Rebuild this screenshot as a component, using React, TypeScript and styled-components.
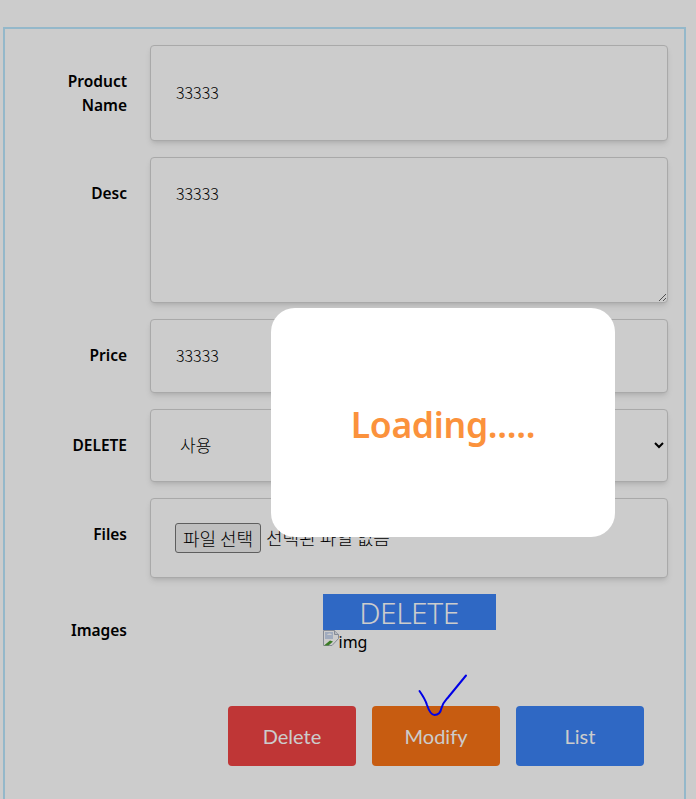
import React from "react";
import styled, { createGlobalStyle } from "styled-components";

const GlobalStyle = createGlobalStyle`
  html, body {
    margin: 0;
    padding: 0;
    background: #fff;
    overflow: hidden;
  }
  body {
    font-family: "Noto Sans CJK KR", "Noto Sans", sans-serif;
    color: #000;
  }
`;

const Page = styled.div`
  padding: 27px 10px 0 3px;
  height: 799px;
  box-sizing: border-box;
`;

const FormBox = styled.div`
  border: 2px solid #bae6fd;
  height: 800px;
  box-sizing: border-box;
  padding: 16px 16px 0 0;
  display: flex;
  flex-direction: column;
  gap: 16px;
`;

const Row = styled.div<{ $height: number }>`
  display: flex;
  height: ${(p) => p.$height}px;
`;

const Label = styled.div`
  width: 122px;
  flex: none;
  box-sizing: border-box;
  padding-top: 24px;
  margin-right: 23px;
  text-align: right;
  font-family: "Noto Sans", sans-serif;
  font-size: 15.5px;
  line-height: 24px;
  font-weight: 600;
`;

const fieldCss = `
  flex: 1;
  min-width: 0;
  box-sizing: border-box;
  border: 1px solid #d4d4d4;
  border-radius: 4px;
  box-shadow: 0 4px 6px -1px rgba(0, 0, 0, 0.1), 0 2px 4px -2px rgba(0, 0, 0, 0.1);
  background: #fff;
  font-family: "Noto Sans CJK KR", "Noto Sans", sans-serif;
  font-size: 16px;
  font-weight: 300;
  color: #000;
  outline: none;
`;

const TextField = styled.input`
  ${fieldCss}
  padding: 0 24px 2px 25px;
`;

const TextArea = styled.textarea`
  ${fieldCss}
  padding: 23px 24px 24px 25px;
  line-height: 24px;
  resize: vertical;
`;

const SelectField = styled.select`
  ${fieldCss}
  padding: 0 0 2px 25px;
  font-size: 17px;
`;

const FileBox = styled.div`
  ${fieldCss}
  display: flex;
  align-items: flex-start;
  padding: 24px;
  gap: 5px;
  font-size: 18px;
  line-height: 29px;
`;

const FileButton = styled.button`
  width: 86px;
  height: 30px;
  padding: 0;
  box-sizing: border-box;
  border: 1px solid #767676;
  border-radius: 3px;
  background: #efefef;
  font: inherit;
  color: #000;
  flex: none;
`;

const ImageColumn = styled.div`
  flex: 1;
  display: flex;
  justify-content: center;
`;

const ImageCard = styled.div`
  width: 173px;
`;

const DeleteBar = styled.div`
  height: 36px;
  box-sizing: border-box;
  padding-top: 2px;
  background: #3b82f6;
  color: #fff;
  text-align: center;
  font-family: "Noto Sans", sans-serif;
  font-size: 30px;
  font-weight: 300;
  letter-spacing: -0.5px;
  line-height: 34px;
`;

const BrokenImage = styled.div`
  display: flex;
  align-items: flex-start;
  height: 24px;
  font-family: "Noto Sans", sans-serif;
  font-size: 16px;
  line-height: 24px;
`;

const ButtonRow = styled.div`
  display: flex;
  justify-content: flex-end;
  gap: 16px;
  padding-right: 24px;
`;

const ActionButton = styled.button<{ $color: string }>`
  width: 128px;
  height: 60px;
  border: 0;
  border-radius: 4px;
  background: ${(p) => p.$color};
  color: #fff;
  font-family: Lato, "Noto Sans", sans-serif;
  font-size: 20px;
  font-weight: 400;
`;

const Backdrop = styled.div`
  position: fixed;
  inset: 0;
  background: rgba(0, 0, 0, 0.2);
`;

const LoadingCard = styled.div`
  position: fixed;
  left: 271px;
  top: 308px;
  width: 344px;
  height: 229px;
  box-sizing: border-box;
  padding-top: 3px;
  display: flex;
  align-items: center;
  justify-content: center;
  border-radius: 24px;
  background: #fff;
  color: #fb923c;
  font-family: "Noto Sans", sans-serif;
  font-size: 35.5px;
  font-weight: 600;
  letter-spacing: -0.3px;
`;

const Scribble = styled.svg`
  position: fixed;
  left: 415px;
  top: 670px;
`;

const App = () => {
  return (
    <>
      <GlobalStyle />
      <Page>
        <FormBox>
          <Row $height={96}>
            <Label>
              Product
              <br />
              Name
            </Label>
            <TextField readOnly value="33333" />
          </Row>
          <Row $height={146}>
            <Label>Desc</Label>
            <TextArea readOnly value="33333" />
          </Row>
          <Row $height={74}>
            <Label>Price</Label>
            <TextField readOnly value="33333" />
          </Row>
          <Row $height={73}>
            <Label>DELETE</Label>
            <SelectField defaultValue="use">
              <option value="use">사용</option>
            </SelectField>
          </Row>
          <Row $height={80}>
            <Label>Files</Label>
            <FileBox>
              <FileButton>파일 선택</FileButton>
              <span>선택된 파일 없음</span>
            </FileBox>
          </Row>
          <Row $height={96}>
            <Label>Images</Label>
            <ImageColumn>
              <ImageCard>
                <DeleteBar>DELETE</DeleteBar>
                <BrokenImage>
                  <svg width="16" height="16" viewBox="0 0 16 16">
                    <path d="M0.5 0.5h11l4 4v4L9 15.5H0.5z" fill="#fff" stroke="#a8b0bd" />
                    <path d="M11.5 0.5v4h4" fill="#e4e8ef" stroke="#a8b0bd" />
                    <path d="M2 2h8v7H2z" fill="#c8d6ee" />
                    <path d="M4 5c1-2 4-2 5 0z" fill="#fff" />
                    <path d="M1 15.5 7 10.5l3 1-4.5 4z" fill="#4a9a2f" />
                  </svg>
                  <span>img</span>
                </BrokenImage>
              </ImageCard>
            </ImageColumn>
          </Row>
          <ButtonRow>
            <ActionButton $color="#ef4444">Delete</ActionButton>
            <ActionButton $color="#f97316">Modify</ActionButton>
            <ActionButton $color="#3b82f6">List</ActionButton>
          </ButtonRow>
        </FormBox>
      </Page>
      <Backdrop />
      <LoadingCard>Loading.....</LoadingCard>
      <Scribble width="56" height="50" viewBox="0 0 56 50" fill="none">
        <path
          d="M4.5 21C8 26 10.5 30 12 35C14 41 16 45 19.5 45C23 45 25.5 43 26.5 38C27.5 33 30 31 33 27.5L51 5.5"
          stroke="#0000e6"
          strokeWidth="2"
          strokeLinecap="round"
        />
      </Scribble>
    </>
  );
};

export default App;
